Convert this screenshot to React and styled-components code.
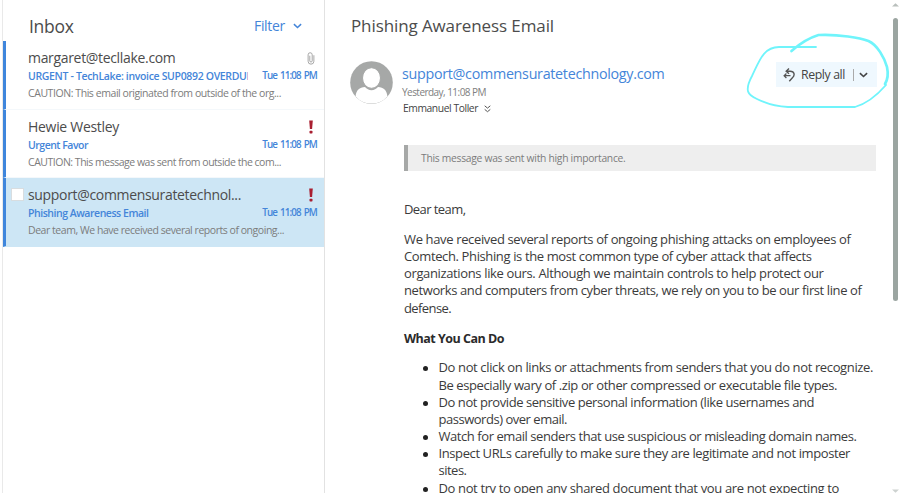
import React from "react";
import styled, { createGlobalStyle } from "styled-components";

const Global = createGlobalStyle`
  * { box-sizing: border-box; }
  body { margin: 0; background: #fff; overflow: hidden; font-family: "Open Sans", "Noto Sans", sans-serif; }
  h1, h2, p, ul { margin: 0; padding: 0; font-weight: 400; }
  button { border: 0; padding: 0; background: none; font-family: inherit; }
`;

const Text = styled.span`
  display: block;
  white-space: nowrap;
  letter-spacing: ${(p) => p.$track || 0}px;
`;

const Window = styled.main`
  display: flex;
  width: 900px;
  height: 504px;
  padding-left: 2px;
  color: #3b3b3b;
`;

const Sidebar = styled.aside`
  width: 323px;
  height: 493px;
  border-left: 1px solid #e9e9e9;
  border-right: 1px solid #e2e2e2;
`;

const SidebarHeader = styled.header`
  display: flex;
  align-items: center;
  justify-content: space-between;
  height: 41px;
  padding: 11px 22px 0 26px;
`;

const FolderTitle = styled(Text).attrs({ as: "h1" })`
  font-size: 17.5px;
  line-height: 24px;
  color: #4c4c4c;
`;

const FilterButton = styled.button`
  display: flex;
  align-items: center;
  gap: 8px;
  font-size: 14px;
  line-height: 20px;
  color: #4485d9;
`;

const Message = styled.article`
  position: relative;
  height: 68.5px;
  padding: 7px 6px 0 22px;
  border-left: 3px solid #3f86dc;
  border-bottom: 1px solid ${(p) => (p.$selected ? "#cde6f5" : "#f4f8fb")};
  background: ${(p) => (p.$selected ? "#cde6f5" : "#fff")};
`;

const MessageRow = styled.div`
  display: flex;
  align-items: center;
  justify-content: space-between;
  height: ${(p) => p.$height}px;
`;

const Sender = styled(Text)`
  font-size: 14px;
  line-height: 20px;
  color: #4c4c4c;
`;

const Flag = styled.span`
  display: flex;
  width: 14px;
  justify-content: center;
`;

const Subject = styled(Text)`
  width: 220px;
  overflow: hidden;
  font-size: 10.5px;
  line-height: 16px;
  font-weight: 600;
  color: #4485d9;
`;

const Time = styled(Text)`
  margin-right: 1px;
  font-size: 9.8px;
  line-height: 16px;
  font-weight: 600;
  word-spacing: 1.2px;
  color: #4485d9;
`;

const Preview = styled(Text)`
  padding-top: 1px;
  font-size: 10.5px;
  line-height: 17px;
  color: #7c7c7c;
`;

const Checkbox = styled.span`
  position: absolute;
  left: 5px;
  top: 10px;
  width: 13px;
  height: 13px;
  background: #fff;
  border: 1px solid #d8dde0;
`;

const Reader = styled.section`
  flex: 1;
  height: 493px;
  overflow: hidden;
  padding: 14px 0 0 25px;
`;

const SubjectTitle = styled(Text).attrs({ as: "h2" })`
  padding-left: 1px;
  font-size: 17px;
  line-height: 24px;
  color: #4c4c4c;
`;

const Envelope = styled.header`
  display: flex;
  align-items: flex-start;
  height: 107px;
  padding: 23px 14px 0 0;
`;

const People = styled.div`
  flex: 1;
  padding: 3px 0 0 9px;
`;

const From = styled(Text)`
  font-size: 14.3px;
  line-height: 20px;
  color: #4485d9;
`;

const Sent = styled(Text)`
  font-size: 10px;
  line-height: 16px;
  color: #808080;
`;

const Recipient = styled.div`
  display: flex;
  align-items: center;
  gap: 6px;
  padding-left: 1px;
  font-size: 10.3px;
  line-height: 17px;
  color: #444;
`;

const ReplyGroup = styled.div`
  position: relative;
  display: flex;
  align-items: center;
  width: 101px;
  height: 25px;
  margin-top: 1px;
  padding: 0 9px 0 7px;
  background: #eff8fe;
  color: #444;
`;

const ReplyLabel = styled(Text)`
  margin-left: 6px;
  padding-top: 1px;
  font-size: 12.3px;
  line-height: 18px;
`;

const Divider = styled.span`
  width: 1px;
  height: 12px;
  margin: 0 5px 0 auto;
  background: #aaa;
`;

const Marker = styled.svg`
  position: absolute;
  left: -31px;
  top: -31px;
  pointer-events: none;
`;

const Notice = styled.div`
  display: flex;
  align-items: center;
  width: 472px;
  height: 26px;
  margin-left: 54px;
  padding-left: 13px;
  border-left: 4px solid #a6a8a7;
  background: #eee;
`;

const NoticeText = styled(Text)`
  font-size: 10.3px;
  line-height: 16px;
  color: #7c7c7c;
`;

const Body = styled.div`
  margin-left: 54px;
  padding-top: 30px;
  font-size: 13px;
  line-height: 17.15px;
`;

const Paragraph = styled.p`
  margin-bottom: 12.8px;
`;

const Heading = styled(Text)`
  margin-bottom: 12.8px;
  font-size: 12.5px;
  font-weight: 700;
  color: #2b2b2b;
`;

const List = styled.ul`
  list-style: none;
`;

const Bullet = styled.li`
  display: flex;
  &::before {
    content: "";
    width: 5px;
    height: 5px;
    margin: 7px 10.5px 0 19px;
    border-radius: 50%;
    background: #222;
  }
`;

const Scrollbar = styled.div`
  display: flex;
  flex-direction: column;
  align-items: center;
  width: 9px;
  height: 493px;
  padding-top: 3px;
`;

const Thumb = styled.div`
  width: 5px;
  height: 283px;
  margin: 11px 0 auto;
  border-radius: 2.5px;
  background: #9ba5a1;
`;

const Chevron = ({ w = 9, s = 1.5 }) => (
  <svg width={w} height="6" viewBox="0 0 9 6" fill="none" stroke="currentColor" strokeWidth={s}>
    <path d="M.9 1.1 4.5 4.5 8.1 1.1" />
  </svg>
);

const Clip = () => (
  <svg width="8" height="13" viewBox="0 0 8 14" fill="none" stroke="#a0a0a0" strokeWidth="1">
    <path d="M2.7 4v5.5a1.3 1.3 0 0 0 2.6 0V3a2.2 2.2 0 0 0-4.4 0v7a3.1 3.1 0 0 0 6.2 0V3.5" />
  </svg>
);

const Important = () => (
  <svg width="6" height="14" viewBox="0 0 6 14" fill="#a91f31">
    <path d="M1.2.5h3.6L4.1 9H1.9z" />
    <rect x="1.5" y="10.7" width="3" height="2.8" rx=".7" />
  </svg>
);

const DoubleChevron = () => (
  <svg width="7" height="8" viewBox="0 0 7 8" fill="none" stroke="#555" strokeWidth="1">
    <path d="M.7.8 3.5 3.1 6.3.8M.7 4.4 3.5 6.7 6.3 4.4" />
  </svg>
);

const Avatar = () => (
  <svg width="43" height="43" viewBox="0 0 43 43">
    <circle cx="21.5" cy="21.5" r="21.3" fill="#a6a8a7" />
    <path
      d="M5.6 35.5C6 29.5 9.5 26 15 26c1.6 2 4 3.2 6.5 3.2S26.4 28 28 26c5.5 0 9 3.5 9.4 9.5A21.3 21.3 0 0 1 21.5 42.6 21.3 21.3 0 0 1 5.6 35.5Z"
      fill="#fff"
    />
    <ellipse cx="21.5" cy="17" rx="9" ry="10.3" fill="#fff" stroke="#a6a8a7" strokeWidth="1" />
  </svg>
);

const ReplyIcon = () => (
  <svg width="12" height="14" viewBox="0 0 12 14" fill="none" stroke="#555">
    <path d="M6 .6 3.2 3.2 6 5.800M3.400 3.200h3.800c4.600 0 4.800 4.400 2.200 6.600L6.300 13.200" strokeWidth="1.400" />
    <path d="M3.400 5.500 1.100 7.700l2.300 2.300M1.500 7.700h6" strokeWidth="1.200" />
  </svg>
);

const Arrow = ({ down }) => (
  <svg width="7" height="4" viewBox="0 0 7 4" fill={down ? "#cdd2d0" : "#b9bfbc"}>
    <path d={down ? "M0 .5h7L3.5 3.8z" : "M0 3.5h7L3.5.2z"} />
  </svg>
);

const messages = [
  {
    sender: ["margaret@tecllake.com", -0.326],
    subject: ["URGENT - TechLake: invoice SUP0892 OVERDUE", -0.34],
    preview: ["CAUTION: This email originated from outside of the org...", -0.433],
    icon: <Clip />,
  },
  {
    sender: ["Hewie Westley", -0.302],
    subject: ["Urgent Favor", -0.499],
    preview: ["CAUTION: This message was sent from outside the com...", -0.482],
    icon: <Important />,
  },
  {
    sender: ["support@commensuratetechnol...", -0.33],
    subject: ["Phishing Awareness Email", -0.465],
    preview: ["Dear team, We have received several reports of ongoing...", -0.459],
    icon: <Important />,
    selected: true,
  },
];

const intro = [
  ["We have received several reports of ongoing phishing attacks on employees of", -0.359],
  ["Comtech. Phishing is the most common type of cyber attack that affects", -0.375],
  ["organizations like ours. Although we maintain controls to help protect our", -0.361],
  ["networks and computers from cyber threats, we rely on you to be our first line of", -0.394],
  ["defense.", -0.601],
];

const tips = [
  [
    ["Do not click on links or attachments from senders that you do not recognize.", -0.368],
    ["Be especially wary of .zip or other compressed or executable file types.", -0.4],
  ],
  [
    ["Do not provide sensitive personal information (like usernames and", -0.43],
    ["passwords) over email.", -0.476],
  ],
  [["Watch for email senders that use suspicious or misleading domain names.", -0.435]],
  [
    ["Inspect URLs carefully to make sure they are legitimate and not imposter", -0.396],
    ["sites.", -0.503],
  ],
  [["Do not try to open any shared document that you are not expecting to", -0.362]],
];

const Lines = ({ lines }) =>
  lines.map(([text, track]) => (
    <Text key={text} $track={track}>
      {text}
    </Text>
  ));

export default function App() {
  return (
    <>
      <Global />
      <Window>
        <Sidebar>
          <SidebarHeader>
            <FolderTitle $track={-0.3}>Inbox</FolderTitle>
            <FilterButton>
              <Text $track={-0.311}>Filter</Text>
              <Chevron />
            </FilterButton>
          </SidebarHeader>
          {messages.map(({ sender, subject, preview, icon, selected }) => (
            <Message key={sender[0]} $selected={selected}>
              {selected && <Checkbox />}
              <MessageRow $height={20}>
                <Sender $track={sender[1]}>{sender[0]}</Sender>
                <Flag>{icon}</Flag>
              </MessageRow>
              <MessageRow $height={16}>
                <Subject $track={subject[1]}>{subject[0]}</Subject>
                <Time $track={-0.86}>Tue 11:08 PM</Time>
              </MessageRow>
              <Preview $track={preview[1]}>{preview[0]}</Preview>
            </Message>
          ))}
        </Sidebar>
        <Reader>
          <SubjectTitle $track={-0.104}>Phishing Awareness Email</SubjectTitle>
          <Envelope>
            <Avatar />
            <People>
              <From $track={-0.289}>support@commensuratetechnology.com</From>
              <Sent $track={-0.538}>Yesterday, 11:08 PM</Sent>
              <Recipient>
                <Text $track={-0.417}>Emmanuel Toller</Text>
                <DoubleChevron />
              </Recipient>
            </People>
            <ReplyGroup>
              <ReplyIcon />
              <ReplyLabel $track={-0.391}>Reply all</ReplyLabel>
              <Divider />
              <Chevron s={1.6} />
              <Marker width="146" height="80" viewBox="744 31 146 80" fill="none" stroke="#70f4fb" strokeLinecap="round">
                <path
                  d="M815 47h-37C762 47 758 62 751 76c-8 15-4 19 5 23 10 5 19 7.5 31 8h67c14-4 24-14 31-22"
                  strokeWidth="1.8"
                />
                <path d="M790.5 51c9-8 17-13 27-16 20-1 42 3 50 6 9 4 16 17 18.5 26 1.5 7 1 12-2 17" strokeWidth="2.7" />
              </Marker>
            </ReplyGroup>
          </Envelope>
          <Notice>
            <NoticeText $track={-0.277}>This message was sent with high importance.</NoticeText>
          </Notice>
          <Body>
            <Paragraph>
              <Lines lines={[["Dear team,", -0.57]]} />
            </Paragraph>
            <Paragraph>
              <Lines lines={intro} />
            </Paragraph>
            <Heading $track={-0.5}>What You Can Do</Heading>
            <List>
              {tips.map((lines) => (
                <Bullet key={lines[0][0]}>
                  <div>
                    <Lines lines={lines} />
                  </div>
                </Bullet>
              ))}
            </List>
          </Body>
        </Reader>
        <Scrollbar>
          <Arrow />
          <Thumb />
          <Arrow down />
        </Scrollbar>
      </Window>
    </>
  );
}
